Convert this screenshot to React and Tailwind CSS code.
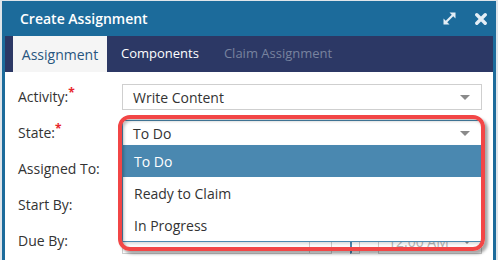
import React from "react";

function Arrow() {
  return (
    <svg width="10" height="5" viewBox="0 0 10 5" className="shrink-0">
      <path d="M0 0 L10 0 L5 5 Z" fill="#8a8a8a" />
    </svg>
  );
}

function Label({ children, req }) {
  return (
    <div className="w-[104px] shrink-0 text-[14px] text-[#333] leading-none">
      {children}
      {req && <span className="relative -top-[5px] text-[12px] text-[#e8262b] font-bold">*</span>}
    </div>
  );
}

export default function App() {
  return (
    <div className="relative w-[498px] h-[260px] overflow-hidden bg-[#dfe5ea] pt-[1px] pl-[2px] font-['Open_Sans',sans-serif]">
      <div className="w-[494px] h-[259px] border-x-[3px] border-[#1c6b9b] bg-white flex flex-col">
        {/* title bar */}
        <div className="h-[35px] shrink-0 bg-[#1c6b9b] flex items-center pl-[15px] pr-[6px]">
          <div className="text-white font-semibold text-[14px] leading-none">Create Assignment</div>
          <div className="ml-auto flex items-center gap-[18px]">
            <svg width="15" height="15" viewBox="0 0 15 15">
              <path d="M3 12 L12 3" stroke="#e4eef6" strokeWidth="2.2" />
              <path d="M7.5 1.5 L13.5 1.5 L13.5 7.5 Z" fill="#e4eef6" />
              <path d="M1.5 7.5 L1.5 13.5 L7.5 13.5 Z" fill="#e4eef6" />
            </svg>
            <svg width="12" height="12" viewBox="0 0 12 12">
              <path d="M1.8 1.8 L10.2 10.2 M10.2 1.8 L1.8 10.2" stroke="#e4eef6" strokeWidth="3.4" strokeLinecap="round" />
            </svg>
          </div>
        </div>
        {/* tabs */}
        <div className="h-[36px] shrink-0 bg-[#2c3865] flex items-stretch pl-[8px] text-[14px]">
          <div className="w-[94px] bg-[#f5f5f5] flex items-center justify-center text-[#28557f]">Assignment</div>
          <div className="ml-[14px] flex items-center text-white text-[13px]">Components</div>
          <div className="ml-[25px] flex items-center text-[#78839f] text-[13px]">Claim Assignment</div>
        </div>
        {/* body */}
        <div className="relative flex-1 pt-[12px] pl-[13px]">
          <div className="flex items-center h-[26px] mb-[10px]">
            <Label req>Activity:</Label>
            <div className="w-[360px] h-[26px] border border-[#cfcfcf] flex items-center pl-[10px] pr-[11px] text-[14px] text-[#333]">
              <span>Write Content</span>
              <span className="ml-auto"><Arrow /></span>
            </div>
          </div>
          <div className="flex items-center h-[26px] mb-[10px]">
            <Label req>State:</Label>
            <div className="relative w-[360px] h-[26px] z-10">
              <div className="h-[26px] border border-[#4c89b0] bg-white flex items-center pl-[10px] pr-[11px] text-[14px] text-[#333]">
                <span>To Do</span>
                <span className="ml-auto"><Arrow /></span>
              </div>
              <div className="absolute top-[25px] left-0 w-full border border-[#4c89b0] border-t-0 bg-white text-[14px] text-[#333] shadow-[0_2px_3px_rgba(0,0,0,0.15)]">
                <div className="h-[32px] bg-[#4a88b0] text-white flex items-center pl-[11px]">To Do</div>
                <div className="h-[32px] flex items-center pl-[11px]">Ready to Claim</div>
                <div className="h-[32px] flex items-center pl-[11px]">In Progress</div>
              </div>
            </div>
          </div>
          <div className="flex items-center h-[26px] mb-[10px]">
            <Label>Assigned To:</Label>
            <div className="w-[360px] h-[26px] border border-[#cfcfcf]" />
          </div>
          <div className="flex items-center h-[26px] mb-[10px]">
            <Label>Start By:</Label>
            <div className="w-[360px] h-[26px] border border-[#cfcfcf]" />
          </div>
          <div className="flex items-center h-[26px]">
            <Label>Due By:</Label>
            <div className="w-[360px] h-[26px] flex items-stretch">
              <div className="w-[187px] border border-[#cfcfcf] border-r-0" />
              <div className="w-[23px] border border-[#cfcfcf]" />
              <div className="w-[18px]" />
              <div className="w-[10px] border-l-2 border-[#4c89b0] border-r border-r-[#cfcfcf] border-b border-b-[#cfcfcf]" />
              <div className="w-[18px]" />
              <div className="flex-1 border border-[#cfcfcf] flex items-center pl-[9px] pr-[9px] text-[14px] text-[#b5b5b5]">
                <span>12:00 AM</span>
                <span className="ml-auto"><Arrow /></span>
              </div>
            </div>
          </div>
        </div>
      </div>
      {/* red annotation */}
      <div className="absolute left-[118px] top-[115px] w-[367px] h-[136px] border-4 border-[#f24646] rounded-[12px] shadow-[3px_3px_3px_rgba(0,0,0,0.35),inset_2px_2px_3px_rgba(0,0,0,0.25)] z-20 pointer-events-none" />
    </div>
  );
}
